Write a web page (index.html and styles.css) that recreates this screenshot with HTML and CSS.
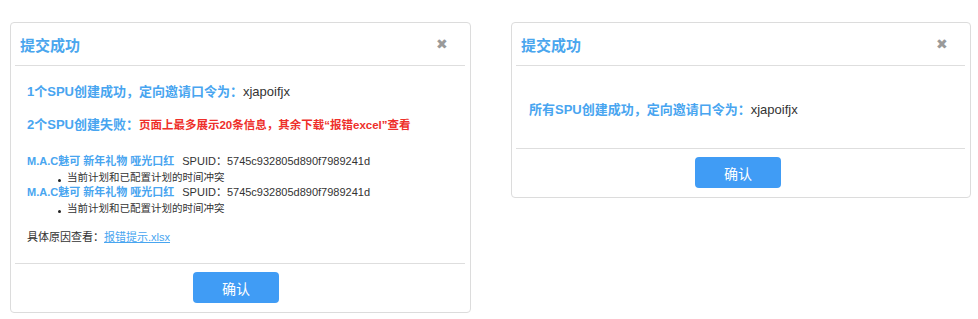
FILE: index.html
```html
<!DOCTYPE html>
<html lang="zh-CN">
<head>
    <meta charset="UTF-8">
    <meta name="viewport" content="width=device-width, initial-scale=1.0">
    <title>提交成功</title>
    <link rel="stylesheet" href="styles.css">
</head>
<body>
    <div class="page">
        <!-- 部分失败 -->
        <div class="dialog dialog-wide">
            <div class="dialog-header">
                <span class="dialog-title">提交成功</span>
                <span class="dialog-close">&#10006;</span>
            </div>
            <div class="dialog-body">
                <p class="msg"><span class="blue">1个SPU创建成功，定向邀请口令为：</span>xjapoifjx</p>
                <p class="msg"><span class="blue">2个SPU创建失败：</span><span class="red">页面上最多展示20条信息，其余下载“报错excel”查看</span></p>
                <div class="fail-list">
                    <div class="fail-item">
                        <div class="fail-name"><span class="blue">M.A.C魅可 新年礼物 哑光口红</span><span class="spuid">SPUID：5745c932805d890f7989241d</span></div>
                        <ul class="reasons">
                            <li>当前计划和已配置计划的时间冲突</li>
                        </ul>
                    </div>
                    <div class="fail-item">
                        <div class="fail-name"><span class="blue">M.A.C魅可 新年礼物 哑光口红</span><span class="spuid">SPUID：5745c932805d890f7989241d</span></div>
                        <ul class="reasons">
                            <li>当前计划和已配置计划的时间冲突</li>
                        </ul>
                    </div>
                </div>
                <p class="detail">具体原因查看：<a href="#">报错提示.xlsx</a></p>
            </div>
            <div class="dialog-footer">
                <button class="btn-ok">确认</button>
            </div>
        </div>

        <!-- 全部成功 -->
        <div class="dialog dialog-narrow">
            <div class="dialog-header">
                <span class="dialog-title">提交成功</span>
                <span class="dialog-close">&#10006;</span>
            </div>
            <div class="dialog-body">
                <p class="msg"><span class="blue">所有SPU创建成功，定向邀请口令为：</span>xjapoifjx</p>
            </div>
            <div class="dialog-footer">
                <button class="btn-ok">确认</button>
            </div>
        </div>
    </div>
</body>
</html>
```

FILE: styles.css
```css
body {
    margin: 0;
    padding: 0;
    background-color: #fff;
    font-family: "Liberation Sans", "Noto Sans CJK SC", sans-serif;
    color: #333;
}

.page {
    display: flex;
    align-items: flex-start;
    gap: 40px;
    padding: 22px 0 0 10px;
}

.dialog {
    box-sizing: border-box;
    border: 1px solid #dcdcdc;
    border-radius: 4px;
    padding: 0 5px 0 4px;
    background-color: #fff;
}

.dialog-wide {
    width: 461px;
}

.dialog-narrow {
    width: 460px;
}

.dialog-header {
    display: flex;
    align-items: center;
    justify-content: space-between;
    height: 42px;
    padding: 0 17px 0 5px;
    border-bottom: 1px solid #dedede;
}

.dialog-title {
    font-size: 15px;
    font-weight: bold;
    color: #4aa6ee;
}

.dialog-close {
    font-size: 14px;
    color: #9a9a9a;
    cursor: pointer;
}

.dialog-body {
    padding: 16px 12px 18px;
    border-bottom: 1px solid #dedede;
}

.dialog-narrow .dialog-body {
    padding: 34px 13px 28px;
}

.msg {
    margin: 0 0 13px;
    font-size: 13px;
    line-height: 20px;
}

.dialog-narrow .msg {
    margin: 0;
}

.blue {
    color: #48a5f0;
}

.msg .blue,
.red,
.fail-name .blue {
    font-weight: bold;
}

.red {
    color: #ee2f2a;
    font-size: 11.5px;
}

.fail-list {
    margin-top: 19px;
    font-size: 11px;
    line-height: 15.5px;
}

.spuid {
    margin-left: 8px;
}

.reasons {
    list-style: none;
    margin: 0;
    padding: 0 0 0 40px;
    font-size: 10.5px;
}

.reasons li {
    position: relative;
}

.reasons li::before {
    content: "";
    position: absolute;
    left: -9px;
    top: 9px;
    width: 3px;
    height: 3px;
    border-radius: 50%;
    background-color: #222;
}

.detail {
    margin: 13px 0 0;
    font-size: 11px;
    line-height: 16px;
}

.detail a {
    color: #48a5f0;
}

.dialog-footer {
    display: flex;
    justify-content: center;
    padding: 8px 0 9px;
}

.btn-ok {
    width: 86px;
    height: 31px;
    border: none;
    border-radius: 4px;
    background-color: #409cf5;
    color: #fff;
    font-family: inherit;
    font-size: 14px;
    cursor: pointer;
}

.dialog-wide .btn-ok {
    margin-right: 8px;
}

.dialog-narrow .btn-ok {
    margin-right: 5px;
}
```
